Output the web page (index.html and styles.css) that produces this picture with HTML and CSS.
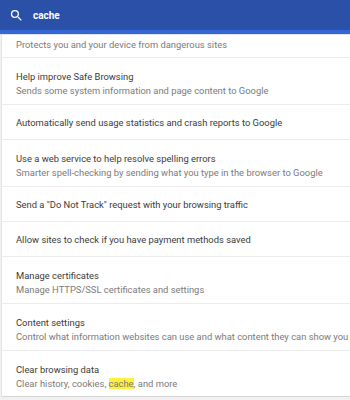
FILE: index.html
```html
<!DOCTYPE html>
<html>
<head>
<meta charset="utf-8">
<link rel="stylesheet" href="styles.css">
</head>
<body>
<header class="bar">
  <svg class="search-icon" width="15" height="15" viewBox="0 0 24 24"><path fill="#fff" d="M15.5 14h-.79l-.28-.27A6.47 6.47 0 0 0 16 9.5 6.5 6.5 0 1 0 9.5 16c1.61 0 3.09-.59 4.230-1.57l.27.28v.79l5 4.99L20.49 19l-4.99-5zm-6 0C7.01 14 5 11.99 5 9.5S7.01 5 9.5 5 14 7.01 14 9.5 11.99 14 9.5 14z"/></svg>
  <span class="query">cache</span>
</header>
<div class="strip"></div>
<main class="card">
  <div class="row first"><div class="sub">Protects you and your device from dangerous sites</div></div>
  <div class="row"><div class="title">Help improve Safe Browsing</div><div class="sub">Sends some system information and page content to Google</div></div>
  <div class="row single"><div class="title">Automatically send usage statistics and crash reports to Google</div></div>
  <div class="row"><div class="title">Use a web service to help resolve spelling errors</div><div class="sub">Smarter spell-checking by sending what you type in the browser to Google</div></div>
  <div class="row single"><div class="title">Send a "Do Not Track" request with your browsing traffic</div></div>
  <div class="row single"><div class="title">Allow sites to check if you have payment methods saved</div></div>
  <div class="row"><div class="title">Manage certificates</div><div class="sub">Manage HTTPS/SSL certificates and settings</div></div>
  <div class="row"><div class="title">Content settings</div><div class="sub">Control what information websites can use and what content they can show you</div></div>
  <div class="row last"><div class="title">Clear browsing data</div><div class="sub">Clear history, cookies, <mark class="hl">cache</mark>, and more</div></div>
</main>
</body>
</html>
```
FILE: styles.css
```css
html, body {
  margin: 0;
  padding: 0;
  background: #f1f1f1;
  font-family: Roboto, "Liberation Sans", sans-serif;
  width: 350px;
  height: 400px;
  overflow: hidden;
}
.bar {
  height: 30px;
  background: #2b50a8;
  display: flex;
  align-items: center;
  padding-left: 9px;
  box-sizing: border-box;
}
.search-icon {
  display: block;
  margin-right: 9px;
  margin-top: 1px;
}
.query {
  color: #fff;
  font-size: 10px;
  font-weight: 700;
  margin-top: 1px;
}
.strip {
  height: 4px;
  background: #3566d6;
  border-bottom: 1px solid #dfe3ee;
}
.card {
  background: #fff;
  margin-left: 1px;
  border-left: 1px solid #e4e4e4;
  border-bottom: 1px solid #d6d6d6;
  height: 362px;
  box-sizing: border-box;
}
.row {
  padding: 13px 14px 0;
  border-bottom: 1px solid #ececec;
  display: flex;
  flex-direction: column;
  gap: 2px;
  box-sizing: border-box;
  height: 47px;
}
.row.first {
  height: 23px;
  padding-top: 0;
  padding-bottom: 6px;
  justify-content: flex-end;
}
.row.single {
  height: 35px;
  padding-top: 12px;
}
.row.last {
  border-bottom: none;
}
.title {
  font-size: 9.4px;
  color: #3a3a3a;
  line-height: 12px;
  white-space: nowrap;
}
.sub {
  font-size: 9.4px;
  color: #7a7a7a;
  line-height: 12px;
  white-space: nowrap;
}
.hl {
  background: #fff03a;
  color: #7a7a7a;
}
```
